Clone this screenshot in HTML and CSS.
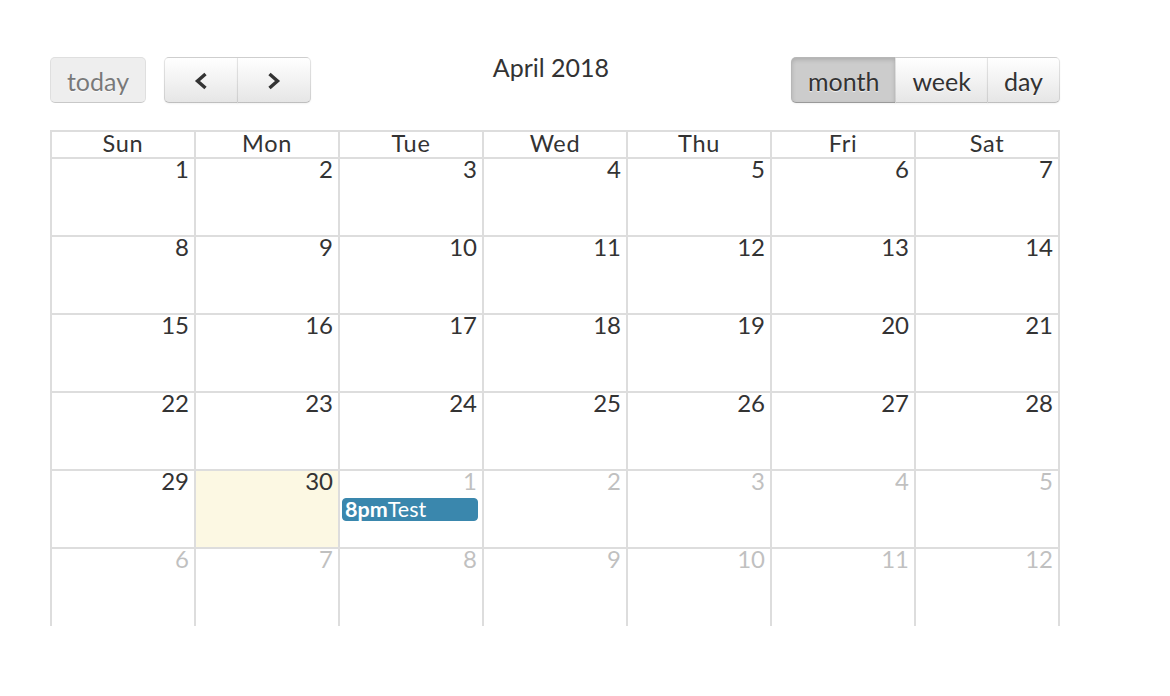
FILE: index.html
```html
<!DOCTYPE html>
<html>
<head lang="en">
<meta charset="UTF-8">
<title>Calendar</title>
<link rel="stylesheet" href="styles.css">
</head>
<body>
<div class="calendar">
    <div class="toolbar">
        <div class="left">
            <button class="btn disabled today">today</button>
            <div class="group">
                <button class="btn icon first"><svg width="14" height="18" viewBox="0 0 14 18"><path d="M11.5 2 L3.5 9 L11.5 16" fill="none" stroke="#333" stroke-width="3.4"/></svg></button>
                <button class="btn icon last"><svg width="14" height="18" viewBox="0 0 14 18"><path d="M2.5 2 L10.5 9 L2.5 16" fill="none" stroke="#333" stroke-width="3.4"/></svg></button>
            </div>
        </div>
        <h2>April 2018</h2>
        <div class="group">
            <button class="btn active first">month</button>
            <button class="btn">week</button>
            <button class="btn last">day</button>
        </div>
    </div>

    <div class="view">
        <div class="grid">
            <div class="head">Sun</div>
            <div class="head">Mon</div>
            <div class="head">Tue</div>
            <div class="head">Wed</div>
            <div class="head">Thu</div>
            <div class="head">Fri</div>
            <div class="head">Sat</div>

            <div class="day"><span class="num">1</span></div>
            <div class="day"><span class="num">2</span></div>
            <div class="day"><span class="num">3</span></div>
            <div class="day"><span class="num">4</span></div>
            <div class="day"><span class="num">5</span></div>
            <div class="day"><span class="num">6</span></div>
            <div class="day"><span class="num">7</span></div>

            <div class="day"><span class="num">8</span></div>
            <div class="day"><span class="num">9</span></div>
            <div class="day"><span class="num">10</span></div>
            <div class="day"><span class="num">11</span></div>
            <div class="day"><span class="num">12</span></div>
            <div class="day"><span class="num">13</span></div>
            <div class="day"><span class="num">14</span></div>

            <div class="day"><span class="num">15</span></div>
            <div class="day"><span class="num">16</span></div>
            <div class="day"><span class="num">17</span></div>
            <div class="day"><span class="num">18</span></div>
            <div class="day"><span class="num">19</span></div>
            <div class="day"><span class="num">20</span></div>
            <div class="day"><span class="num">21</span></div>

            <div class="day"><span class="num">22</span></div>
            <div class="day"><span class="num">23</span></div>
            <div class="day"><span class="num">24</span></div>
            <div class="day"><span class="num">25</span></div>
            <div class="day"><span class="num">26</span></div>
            <div class="day"><span class="num">27</span></div>
            <div class="day"><span class="num">28</span></div>

            <div class="day"><span class="num">29</span></div>
            <div class="day current"><span class="num">30</span></div>
            <div class="day other"><span class="num">1</span>
                <div class="event"><b>8pm</b>Test</div>
            </div>
            <div class="day other"><span class="num">2</span></div>
            <div class="day other"><span class="num">3</span></div>
            <div class="day other"><span class="num">4</span></div>
            <div class="day other"><span class="num">5</span></div>

            <div class="day other"><span class="num">6</span></div>
            <div class="day other"><span class="num">7</span></div>
            <div class="day other"><span class="num">8</span></div>
            <div class="day other"><span class="num">9</span></div>
            <div class="day other"><span class="num">10</span></div>
            <div class="day other"><span class="num">11</span></div>
            <div class="day other"><span class="num">12</span></div>
        </div>
    </div>
</div>
</body>
</html>
```

FILE: styles.css
```css
body {
    margin: 0;
    background: #fff;
    font-family: Lato, "Open Sans", sans-serif;
    color: #333;
}

.calendar {
    width: 1010px;
    margin: 57px 0 0 50px;
    font-size: 24px;
}

/* toolbar */
.toolbar {
    display: flex;
    justify-content: space-between;
    align-items: flex-start;
    height: 46px;
    margin-bottom: 27px;
}
.left {
    display: flex;
    gap: 18px;
}
.toolbar h2 {
    margin: 0;
    font-size: 25px;
    font-weight: normal;
    line-height: 18px;
    padding-top: 1px;
}
.group {
    display: flex;
}

.btn {
    height: 46px;
    padding: 1px 16px 0;
    font-family: inherit;
    font-size: 25px;
    color: #333;
    background-color: #f5f5f5;
    background-image: linear-gradient(to bottom, #fff, #e6e6e6);
    border: 1px solid;
    border-color: rgba(0,0,0,0.1) rgba(0,0,0,0.1) rgba(0,0,0,0.25);
    border-radius: 0;
    text-shadow: 0 1px 1px rgba(255,255,255,0.75);
    box-shadow: inset 0 1px 0 rgba(255,255,255,0.2), 0 1px 2px rgba(0,0,0,0.05);
    cursor: pointer;
}
.group .btn + .btn {
    margin-left: -1px;
}
.btn.first {
    border-radius: 5px 0 0 5px;
}
.btn.last {
    border-radius: 0 5px 5px 0;
}
.btn.today {
    width: 96px;
    padding: 1px 0 0;
    border-radius: 5px;
}
.btn.icon {
    width: 74px;
    display: flex;
    align-items: center;
    justify-content: center;
}
.btn.disabled {
    background-color: #e6e6e6;
    background-image: none;
    opacity: 0.65;
    box-shadow: none;
    cursor: default;
}
.btn.active {
    background-color: #ccc;
    background-image: none;
    box-shadow: inset 0 2px 4px rgba(0,0,0,0.15), 0 1px 2px rgba(0,0,0,0.05);
}

/* month grid, cut off at the bottom like a scroller */
.view {
    height: 496px;
    overflow: hidden;
}
.grid {
    display: grid;
    grid-template-columns: repeat(7, 142px);
    grid-template-rows: 25px repeat(5, 76px) 80px;
    gap: 2px;
    padding: 2px;
    background: #ddd;
}
.head {
    background: #fff;
    text-align: center;
    font-size: 23.5px;
    line-height: 23px;
    letter-spacing: 0.7px;
}
.day {
    background: #fff;
    display: flex;
    flex-direction: column;
}
.day .num {
    text-align: right;
    padding: 2px 5px 0;
    line-height: 15px;
}
.day.current {
    background: #fcf8e3;
}
.day.other .num {
    opacity: 0.3;
}

.event {
    margin: 10px 4px 0 2px;
    padding: 0 2px;
    background: #3a87ad;
    border: 1px solid #3a87ad;
    border-radius: 4px;
    color: #fff;
    font-size: 21.5px;
    line-height: 21px;
}
.event b {
    font-weight: bold;
}
```
